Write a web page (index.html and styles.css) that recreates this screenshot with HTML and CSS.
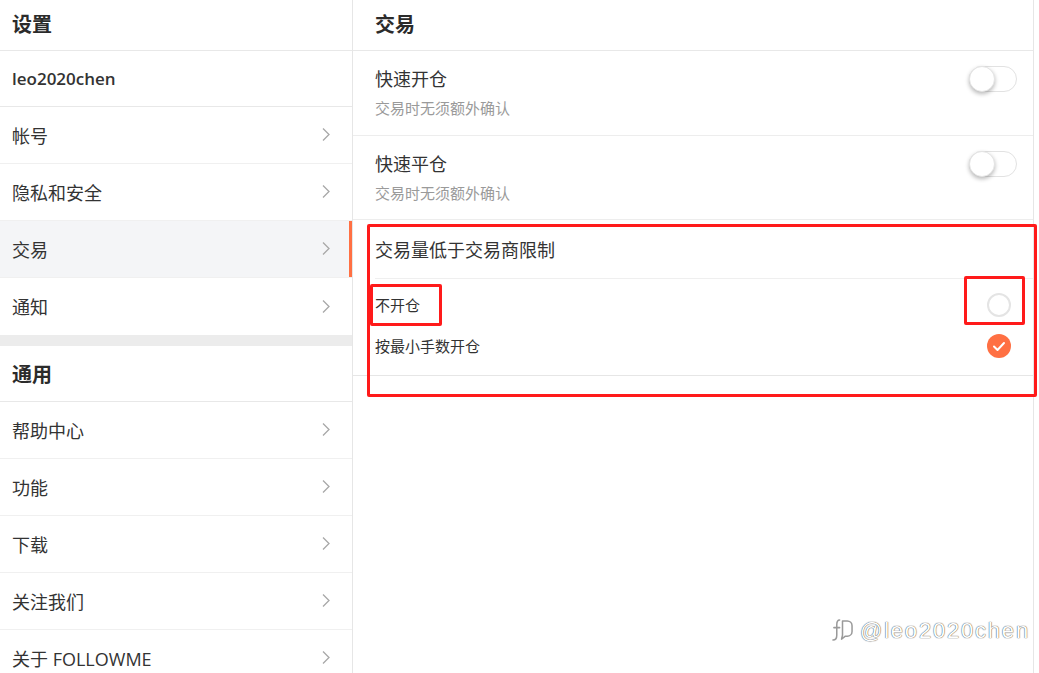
FILE: index.html
```html
<!DOCTYPE html>
<html lang="zh-CN">
<head>
<meta charset="utf-8">
<title>设置 - 交易</title>
<link rel="stylesheet" href="styles.css">
</head>
<body>
<div class="app">
  <aside class="side">
    <div class="side-head">设置</div>
    <div class="side-user">leo2020chen</div>
    <div class="side-item"><span>帐号</span><svg class="chev" viewBox="0 0 8 14"><polyline points="1,1 7,7 1,13"/></svg></div>
    <div class="side-item"><span>隐私和安全</span><svg class="chev" viewBox="0 0 8 14"><polyline points="1,1 7,7 1,13"/></svg></div>
    <div class="side-item active"><span>交易</span><svg class="chev" viewBox="0 0 8 14"><polyline points="1,1 7,7 1,13"/></svg></div>
    <div class="side-item last"><span>通知</span><svg class="chev" viewBox="0 0 8 14"><polyline points="1,1 7,7 1,13"/></svg></div>
    <div class="side-gap"></div>
    <div class="side-head sub">通用</div>
    <div class="side-item"><span>帮助中心</span><svg class="chev" viewBox="0 0 8 14"><polyline points="1,1 7,7 1,13"/></svg></div>
    <div class="side-item"><span>功能</span><svg class="chev" viewBox="0 0 8 14"><polyline points="1,1 7,7 1,13"/></svg></div>
    <div class="side-item"><span>下载</span><svg class="chev" viewBox="0 0 8 14"><polyline points="1,1 7,7 1,13"/></svg></div>
    <div class="side-item"><span>关注我们</span><svg class="chev" viewBox="0 0 8 14"><polyline points="1,1 7,7 1,13"/></svg></div>
    <div class="side-item"><span>关于 FOLLOWME</span><svg class="chev" viewBox="0 0 8 14"><polyline points="1,1 7,7 1,13"/></svg></div>
  </aside>

  <main class="main">
    <div class="main-head">交易</div>

    <div class="setting">
      <div class="setting-text">
        <div class="setting-title">快速开仓</div>
        <div class="setting-desc">交易时无须额外确认</div>
      </div>
      <span class="toggle"><span class="knob"></span></span>
    </div>

    <div class="setting">
      <div class="setting-text">
        <div class="setting-title">快速平仓</div>
        <div class="setting-desc">交易时无须额外确认</div>
      </div>
      <span class="toggle"><span class="knob"></span></span>
    </div>

    <section class="limit">
      <div class="limit-title">交易量低于交易商限制</div>
      <div class="options">
        <div class="option"><span>不开仓</span><span class="radio"></span></div>
        <div class="option"><span>按最小手数开仓</span><span class="radio checked"><svg viewBox="0 0 24 24"><polyline points="7,12.5 10.5,16 17,9"/></svg></span></div>
      </div>
    </section>

    <div class="mark mark-section"></div>
    <div class="mark mark-label"></div>
    <div class="mark mark-radio"></div>

    <div class="watermark">
      <svg class="zh-logo" viewBox="0 0 22 28">
        <path d="M8 3 C5 3 5 6 5 8 L5 19 C5 23 3 24 1 24"/>
        <path d="M2 11 L8 11"/>
        <path d="M11 4 H16 A5 5 0 0 1 21 9 V15 A5 5 0 0 1 16 20 H14 L10 23 L11 19 Z"/>
      </svg>
      <span>@leo2020chen</span>
    </div>
  </main>
</div>
</body>
</html>
```

FILE: styles.css
```css
* {
  box-sizing: border-box;
}

html, body {
  margin: 0;
  padding: 0;
  background: #ffffff;
}

body {
  font-family: "Open Sans", "Noto Sans CJK SC", sans-serif;
  color: #333333;
  width: 1039px;
  height: 673px;
  overflow: hidden;
}

.app {
  display: flex;
  height: 673px;
}

/* ---------- sidebar ---------- */
.side {
  width: 353px;
  flex: none;
  border-right: 1px solid #e6e6e6;
  display: flex;
  flex-direction: column;
}

.side-head {
  height: 51px;
  flex: none;
  display: flex;
  align-items: center;
  padding: 0 0 4px 12px;
  font-size: 20px;
  font-weight: 700;
  color: #2b2b2b;
  border-bottom: 1px solid #e8e8e8;
}

.side-head.sub {
  height: 56px;
  padding-bottom: 0;
}

.side-user {
  height: 56px;
  flex: none;
  display: flex;
  align-items: center;
  padding: 0 0 0 12px;
  font-size: 17px;
  font-weight: 600;
  color: #333333;
  border-bottom: 1px solid #e8e8e8;
}

.side-item {
  height: 57px;
  flex: none;
  display: flex;
  align-items: center;
  justify-content: space-between;
  padding: 0 22px 1px 12px;
  font-size: 18px;
  color: #333333;
  border-bottom: 1px solid #f0f0f0;
}

.side-item.active {
  background: #f4f5f7;
  box-shadow: inset -3px 0 0 #ff7043;
}

.side-item.last {
  border-bottom: none;
  height: 57px;
}

.chev {
  width: 8px;
  height: 15px;
  fill: none;
  stroke: #a8a8a8;
  stroke-width: 1.3;
}

.side-gap {
  height: 11px;
  flex: none;
  background: #ececec;
}

/* ---------- main ---------- */
.main {
  position: relative;
  width: 681px;
  flex: none;
  border-right: 1px solid #e6e6e6;
}

.main-head {
  height: 51px;
  display: flex;
  align-items: center;
  padding: 0 0 4px 22px;
  font-size: 20px;
  font-weight: 700;
  color: #2b2b2b;
  border-bottom: 1px solid #e8e8e8;
}

.setting {
  display: flex;
  align-items: flex-start;
  justify-content: space-between;
  padding: 16px 16px 16px 22px;
  border-bottom: 1px solid #ededed;
  height: 85px;
}

.setting + .setting {
  height: 84px;
}

.setting-title {
  font-size: 18px;
  line-height: 24px;
  color: #333333;
}

.setting-desc {
  margin-top: 7px;
  font-size: 15px;
  line-height: 20px;
  color: #9a9a9a;
}

.toggle {
  margin-top: -1px;
  width: 48px;
  height: 26px;
  border: 1px solid #e2e2e2;
  border-radius: 13px;
  background: #ffffff;
  display: flex;
  align-items: center;
}

.knob {
  width: 26px;
  height: 26px;
  margin-left: -1px;
  border-radius: 50%;
  background: #ffffff;
  border: 1px solid #e4e4e4;
  box-shadow: 0 2px 4px rgba(0, 0, 0, 0.28);
}

.limit {
  border-bottom: 1px solid #e6e6e6;
}

.limit-title {
  margin-left: 22px;
  height: 59px;
  display: flex;
  align-items: center;
  padding-bottom: 1px;
  font-size: 18px;
  color: #333333;
  border-bottom: 1px solid #efefef;
}

.options {
  padding: 5px 22px 9px 22px;
}

.option {
  height: 41px;
  display: flex;
  align-items: center;
  justify-content: space-between;
  font-size: 15px;
  color: #333333;
}

.radio {
  width: 24px;
  height: 24px;
  border-radius: 50%;
  border: 2px solid #e4e4e4;
  display: flex;
  align-items: center;
  justify-content: center;
}

.radio.checked {
  border: none;
  background: #ff7043;
}

.radio.checked svg {
  width: 24px;
  height: 24px;
  fill: none;
  stroke: #ffffff;
  stroke-width: 2;
  stroke-linecap: round;
  stroke-linejoin: round;
}

/* ---------- annotation boxes ---------- */
.mark {
  position: absolute;
  border: 3px solid #ff1a1a;
  border-radius: 2px;
  pointer-events: none;
}

.mark-section {
  left: 14px;
  top: 224px;
  width: 670px;
  height: 173px;
}

.mark-label {
  left: 17px;
  top: 284px;
  width: 72px;
  height: 42px;
}

.mark-radio {
  left: 611px;
  top: 276px;
  width: 61px;
  height: 49px;
}

/* ---------- watermark ---------- */
.watermark {
  position: absolute;
  left: 479px;
  top: 617px;
  display: flex;
  align-items: center;
  gap: 7px;
  font-family: "Liberation Sans", sans-serif;
  font-size: 22px;
  letter-spacing: 1.8px;
  color: #ffffff;
  text-shadow: 0 0 1px rgba(0, 0, 0, 0.7), 0 0 1px rgba(0, 0, 0, 0.5);
}

.zh-logo {
  width: 21px;
  height: 27px;
  fill: none;
  stroke: #9a9a9a;
  stroke-width: 1.6;
  stroke-linecap: round;
  stroke-linejoin: round;
}
```
